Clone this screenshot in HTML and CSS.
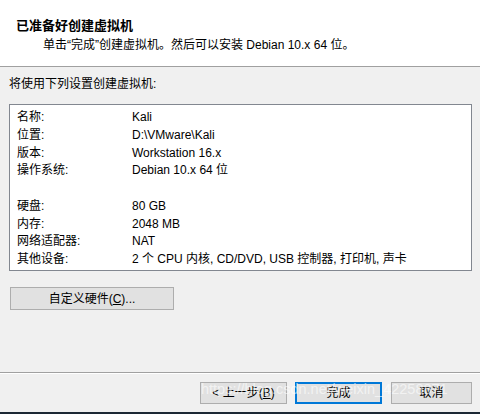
FILE: index.html
```html
<!DOCTYPE html>
<html lang="zh-CN">
<head>
    <meta charset="UTF-8">
    <title>新建虚拟机向导</title>
    <link rel="stylesheet" href="styles.css">
</head>
<body>
    <div class="wizard">
        <div class="header">
            <div class="title">已准备好创建虚拟机</div>
            <div class="subtitle">单击“完成”创建虚拟机。然后可以安装 Debian 10.x 64 位。</div>
        </div>

        <div class="content">
            <div class="intro">将使用下列设置创建虚拟机:</div>

            <div class="summary">
                <div class="row"><span class="label">名称:</span><span class="value">Kali</span></div>
                <div class="row"><span class="label">位置:</span><span class="value">D:\VMware\Kali</span></div>
                <div class="row"><span class="label">版本:</span><span class="value">Workstation 16.x</span></div>
                <div class="row"><span class="label">操作系统:</span><span class="value">Debian 10.x 64 位</span></div>
                <div class="row"></div>
                <div class="row"><span class="label">硬盘:</span><span class="value">80 GB</span></div>
                <div class="row"><span class="label">内存:</span><span class="value">2048 MB</span></div>
                <div class="row"><span class="label">网络适配器:</span><span class="value">NAT</span></div>
                <div class="row"><span class="label">其他设备:</span><span class="value">2 个 CPU 内核, CD/DVD, USB 控制器, 打印机, 声卡</span></div>
            </div>

            <button class="btn custom-btn">自定义硬件(<u>C</u>)...</button>
        </div>

        <div class="footer">
            <button class="btn back-btn">&lt; 上一步(<u>B</u>)</button>
            <button class="btn finish-btn">完成</button>
            <button class="btn cancel-btn">取消</button>
            <div class="watermark">https://blog.csdn.net/weixin_42258871</div>
        </div>
    </div>
    <div class="taskbar"></div>
</body>
</html>
```

FILE: styles.css
```css
body {
    margin: 0;
    width: 480px;
    height: 414px;
    overflow: hidden;
    background: #f0f0f0;
    font-family: "Liberation Sans", "Noto Sans CJK SC", sans-serif;
    font-size: 12px;
    color: #000;
}

.wizard {
    height: 412px;
    display: flex;
    flex-direction: column;
}

.header {
    background: #fff;
    height: 67px;
    box-sizing: border-box;
    border-bottom: 1px solid #a0a0a0;
    padding: 17px 0 0 16px;
}

.title {
    font-weight: bold;
    font-size: 13px;
    line-height: 17px;
}

.subtitle {
    margin: 3px 0 0 27px;
    line-height: 16px;
}

.content {
    flex: 1;
    padding: 9px 8px 0 9px;
}

.intro {
    line-height: 16px;
}

.summary {
    margin-top: 12px;
    height: 167px;
    box-sizing: border-box;
    background: #fff;
    border: 1px solid #828790;
    padding: 4px 7px;
}

.row {
    display: flex;
    height: 17.75px;
    line-height: 17.75px;
    white-space: nowrap;
}

.label {
    width: 115px;
}

.btn {
    font-family: inherit;
    font-size: 12px;
    color: #000;
    background: #e1e1e1;
    border: 1px solid #adadad;
    padding: 0;
    height: 22px;
    line-height: 18px;
}

.custom-btn {
    margin: 16px 0 0 1px;
    width: 164px;
    height: 23px;
}

.footer {
    position: relative;
    border-top: 1px solid #a0a0a0;
    box-shadow: inset 0 1px 0 #fff;
    height: 40px;
    display: flex;
    justify-content: flex-end;
    align-items: flex-start;
    padding: 9px 8px 0 0;
    box-sizing: border-box;
}

.back-btn {
    width: 87px;
}

.finish-btn {
    width: 87px;
    margin-left: 8px;
    border: 2px solid #0078d7;
    line-height: 16px;
}

.cancel-btn {
    width: 81px;
    margin-left: 9px;
}

/* csdn watermark over the buttons */
.watermark {
    position: absolute;
    left: 201px;
    top: 8px;
    width: 272px;
    overflow: hidden;
    font-family: "Liberation Sans", sans-serif;
    font-size: 14.5px;
    color: rgba(255, 255, 255, 0.6);
    white-space: nowrap;
    pointer-events: none;
}

.taskbar {
    height: 2px;
    background: #1c2834;
}
```
